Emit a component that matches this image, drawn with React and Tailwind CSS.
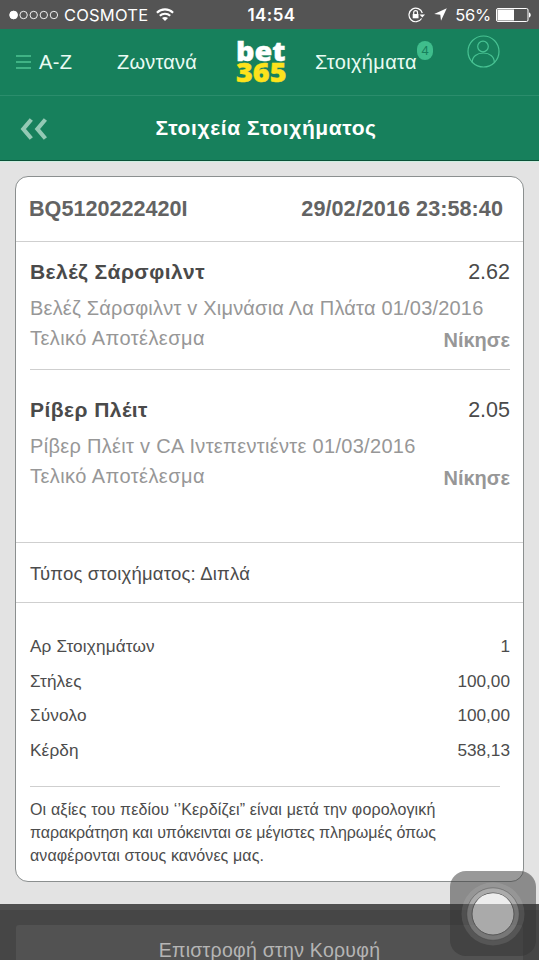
import React from 'react';

const SELECTIONS = [
  {
    name: 'Βελέζ Σάρσφιλντ',
    odds: '2.62',
    event: 'Βελέζ Σάρσφιλντ v Χιμνάσια Λα Πλάτα 01/03/2016',
    tracking: 'tracking-[0.2px]',
    market: 'Τελικό Αποτέλεσμα',
    result: 'Νίκησε',
  },
  {
    name: 'Ρίβερ Πλέιτ',
    odds: '2.05',
    event: 'Ρίβερ Πλέιτ v CA Ιντεπεντιέντε 01/03/2016',
    tracking: 'tracking-[0.31px]',
    market: 'Τελικό Αποτέλεσμα',
    result: 'Νίκησε',
  },
];

const TOTALS = [
  { label: 'Αρ Στοιχημάτων', value: '1' },
  { label: 'Στήλες', value: '100,00' },
  { label: 'Σύνολο', value: '100,00' },
  { label: 'Κέρδη', value: '538,13' },
];

const NOTE_LINES = [
  { text: 'Οι αξίες του πεδίου ‘’Κερδίζει” είναι μετά την φορολογική', tracking: 'tracking-[0.16px]' },
  { text: 'παρακράτηση και υπόκεινται σε μέγιστες πληρωμές όπως', tracking: 'tracking-[-0.07px]' },
  { text: 'αναφέρονται στους κανόνες μας.', tracking: 'tracking-[0.1px]' },
];

const StatusBar = () => (
  <div className="h-[29px] bg-[#545454] text-white grid grid-cols-[1fr_auto_1fr] items-center pl-[9px] pr-[8px] font-['Inter',sans-serif] text-[17px] leading-none whitespace-nowrap">
    <div className="flex items-center">
      <svg width="50" height="10" viewBox="0 0 50 10" fill="none" stroke="white" strokeWidth="0.9">
        <circle cx="4.6" cy="5" r="3.9" fill="white" />
        <circle cx="14.6" cy="5" r="3.7" />
        <circle cx="24.7" cy="5" r="3.7" />
        <circle cx="34.8" cy="5" r="3.7" />
        <circle cx="44.9" cy="5" r="3.7" />
      </svg>
      <span className="ml-[5px] pt-px text-[16.5px] tracking-[0.2px]">COSMOTE</span>
      <svg className="ml-[8px]" width="18" height="13" viewBox="0 0 18 13" fill="none" stroke="white" strokeWidth="2.1">
        <path d="M0.9 4.7C5.4 0.3 12.6 0.3 17.1 4.7" />
        <path d="M3.8 7.7C6.7 5 11.3 5 14.2 7.7" />
        <path d="M6 10L9 13L12 10C10.3 8.5 7.7 8.5 6 10Z" fill="white" stroke="none" />
      </svg>
    </div>
    <span className="ml-[3px] pt-px font-semibold tracking-[0.4px]">14:54</span>
    <div className="flex items-center justify-end">
      <svg width="17" height="16" viewBox="0 0 17 16" fill="none" stroke="white" strokeWidth="1.2">
        <path d="M13.6 11.5A6.8 6.8 0 1 1 14.3 6" />
        <path d="M11.5 7.5H17L14.3 10.5Z" fill="white" stroke="none" />
        <rect x="4.7" y="7" width="5.8" height="4.3" fill="white" stroke="none" />
        <path d="M5.7 7V5.5A1.9 1.9 0 0 1 9.5 5.5V7" />
      </svg>
      <svg className="ml-[9px]" width="13" height="13" viewBox="0 0 13 13" fill="white">
        <path d="M12.8 0.2L7 12.8L6.3 6.7L0.2 6Z" />
      </svg>
      <span className="ml-[8px] pt-px text-[16.5px] tracking-[-0.2px]">56%</span>
      <svg className="ml-[5px]" width="35" height="14" viewBox="0 0 35 14">
        <rect x="0.5" y="0.5" width="31.5" height="13" rx="1.5" fill="none" stroke="white" />
        <rect x="1.5" y="1.5" width="16.5" height="11" fill="white" />
        <path d="M33 4.5C35.3 5 35.3 9 33 9.5Z" fill="white" />
      </svg>
    </div>
  </div>
);

const Logo = () => (
  <svg className="mt-[2px] overflow-visible" width="56" height="62" viewBox="0 -6 56 62" fontFamily="'Open Sans', sans-serif" fontWeight="800" strokeWidth="0.4">
    <text x="0" y="23.5" fontSize="26.5" fill="white" stroke="white" textLength="49.5" lengthAdjust="spacingAndGlyphs">bet</text>
    <text x="0" y="45" fontSize="26" fill="#fde21c" stroke="#fde21c" textLength="50.5" lengthAdjust="spacingAndGlyphs">365</text>
  </svg>
);

const NavBar = () => (
  <div className="h-[67px] bg-[#17805c] border-b border-[#2b8d6c] flex items-start text-[#e9fbf3] text-[20px] leading-[24px] whitespace-nowrap">
    <div className="flex items-center pl-[16px] pt-[21px] w-[117px]">
      <svg width="15" height="14" viewBox="0 0 15 14" stroke="#4fc493" strokeWidth="1.3">
        <path d="M0 1H15M0 7H15M0 13H15" />
      </svg>
      <span className="ml-[8px] tracking-[0.4px]">A-Z</span>
    </div>
    <span className="w-[119px] pt-[21px] tracking-[0.2px]">Ζωντανά</span>
    <div className="w-[79px]">
      <Logo />
    </div>
    <span className="w-[102px] pt-[21px] tracking-[0.35px]">Στοιχήματα</span>
    <span className="mt-[12px] w-[16px] h-[19px] rounded-full bg-[#3fbd8c] text-[#17805c] text-[13px] leading-[19px] text-center">4</span>
    <svg className="ml-[34px] mt-[6px]" width="33" height="33" viewBox="0 0 33 33" fill="none" stroke="#48c293" strokeWidth="1.2">
      <circle cx="16.5" cy="16.5" r="15.5" />
      <circle cx="16" cy="11.5" r="5.3" />
      <path d="M5.2 27.500C5.200 21.500 10 18 16.300 18S27.300 21.500 27.300 27.500" />
    </svg>
  </div>
);

const TitleBar = () => (
  <div className="h-[66px] bg-[#17805c] border-b border-[#cdeee0] grid grid-cols-[1fr_auto_1fr] items-center text-white shadow-[inset_0_-1px_0_#0b5238]">
    <svg className="ml-[20px]" width="27" height="22" viewBox="0 0 27 22" fill="none" stroke="#94c9b5" strokeWidth="4.2">
      <path d="M11.3 1.5L3.3 11L11.3 20.500" />
      <path d="M25.4 1.5L17.400 11L25.400 20.500" />
    </svg>
    <h1 className="mr-[7px] mb-[2px] text-[21px] leading-[24px] font-bold tracking-[0.6px]">Στοιχεία Στοιχήματος</h1>
  </div>
);

const Selection = ({ selection }) => (
  <div className="whitespace-nowrap">
    <div className="flex justify-between text-[21px] leading-[30px] text-[#4a4a4a]">
      <span className="font-bold tracking-[0.45px]">{selection.name}</span>
      <span className="text-[21.5px]">{selection.odds}</span>
    </div>
    <div className="mt-[6px] text-[20px] leading-[30px] text-[#979797]">
      <span className={selection.tracking}>{selection.event}</span>
    </div>
    <div className="flex justify-between text-[20px] leading-[30px] text-[#979797]">
      <span className="tracking-[0.43px]">{selection.market}</span>
      <span className="font-bold pt-[2px]">{selection.result}</span>
    </div>
  </div>
);

const BetCard = () => (
  <div className="mx-[15px] mt-[14px] h-[706px] bg-white border border-[#8b8f8f] rounded-[13px] text-[#4c4c4c]">
    <div className="h-[65px] pl-[13px] pr-[20px] flex justify-between items-center border-b border-[#cfcfcf] text-[21.6px] font-bold text-[#636363]">
      <span>BQ5120222420I</span>
      <span className="tracking-[0.06px]">29/02/2016 23:58:40</span>
    </div>
    <div className="h-[301px] pl-[14px] pr-[13px] pt-[15px] border-b border-[#cfcfcf]">
      <div className="h-[113px] border-b border-[#cfcfcf]">
        <Selection selection={SELECTIONS[0]} />
      </div>
      <div className="pt-[25px]">
        <Selection selection={SELECTIONS[1]} />
      </div>
    </div>
    <div className="h-[60px] px-[14px] pt-[2px] flex items-center border-b border-[#cfcfcf] text-[18.5px] tracking-[0.2px]">
      Τύπος στοιχήματος: Διπλά
    </div>
    <div className="pl-[14px] pr-[13px] pt-[27px]">
      {TOTALS.map((row) => (
        <div key={row.label} className="h-[34.5px] flex justify-between items-center text-[17.2px]">
          <span className="tracking-[0.15px]">{row.label}</span>
          <span>{row.value}</span>
        </div>
      ))}
      <div className="mt-[18px] mr-[10px] border-t border-[#cfcfcf]" />
      <div className="pt-[11px] text-[16px] leading-[23px] whitespace-nowrap">
        {NOTE_LINES.map((line) => (
          <div key={line.text} className={line.tracking}>{line.text}</div>
        ))}
      </div>
    </div>
  </div>
);

const AssistiveTouch = () => (
  <div className="absolute left-[450px] top-[871px] w-[86px] h-[85px] rounded-[16px] bg-[#343434]/50">
    <svg width="86" height="85" viewBox="0 0 86 85" fill="white">
      <circle cx="43" cy="43" r="31.5" fillOpacity="0.1" />
      <circle cx="43" cy="43" r="26.2" fillOpacity="0.2" stroke="#3c3c3c" strokeOpacity="0.5" strokeWidth="0.8" />
      <circle cx="43" cy="43" r="21" fill="#aaaaaa" stroke="#555555" strokeWidth="1" />
      <path d="M25 33A20.5 20.5 0 0 1 61 33Z" fill="#ededed" />
    </svg>
  </div>
);

const App = () => (
  <div className="relative w-[539px] h-[960px] overflow-hidden bg-[#e3e3e3] font-['Liberation_Sans',Arial,sans-serif]">
    <StatusBar />
    <NavBar />
    <TitleBar />
    <BetCard />
    <div className="mt-[22px] h-[56px] bg-[#464646] border-t-[6px] border-[#505050] pt-[15px] px-[16px]">
      <div className="h-[50px] rounded-t-[3px] bg-[#525252] pt-[12px] text-center text-[19.5px] leading-[26px] tracking-[0.27px] text-[#b5b5b5]">
        Επιστροφή στην Κορυφή
      </div>
    </div>
    <AssistiveTouch />
  </div>
);

export default App;
